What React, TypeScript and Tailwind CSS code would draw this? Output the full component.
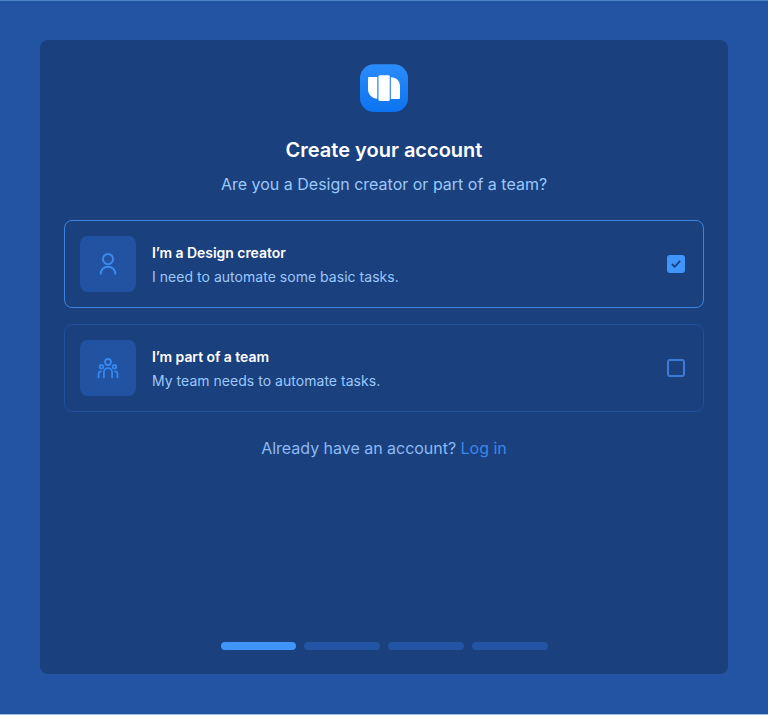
import type { ReactNode } from "react";

function Logo() {
  return (
    <svg className="h-12 w-12 shrink-0" viewBox="0 0 48 48">
      <defs>
        <linearGradient id="logo" x1="0" y1="0" x2="0" y2="1">
          <stop offset="0" stopColor="#2b8cfb" />
          <stop offset="1" stopColor="#0b74f0" />
        </linearGradient>
      </defs>
      <rect y="0.3" width="48" height="47.7" rx="14" fill="url(#logo)" />
      <path d="M9.2 13H17.3V34.8C12 34.5 8 30.5 8 25V14.2Q8 13 9.2 13Z" fill="#fff" />
      <rect x="18.5" y="11.2" width="11.2" height="25.8" rx="1.2" fill="#fff" />
      <path d="M30.8 13.3C36.5 13.5 40 17 40 22.5V33.8Q40 35 38.8 35H30.8Z" fill="#fff" />
    </svg>
  );
}

function PersonIcon() {
  return (
    <svg className="h-6 w-6" viewBox="0 0 24 24" fill="none" stroke="#3b8aec" strokeWidth="1.9" strokeLinecap="round">
      <circle cx="12" cy="7.1" r="5.1" />
      <path d="M4.7 21.8C4.7 17.7 7.9 14.8 12 14.8s7.3 2.9 7.3 7" />
    </svg>
  );
}

function TeamIcon() {
  return (
    <svg className="h-6 w-6" viewBox="0 0 24 24" fill="none" stroke="#3488ee" strokeWidth="1.8" strokeLinecap="round">
      <circle cx="12" cy="6" r="3" />
      <circle cx="5.5" cy="10.8" r="1.8" />
      <circle cx="18.5" cy="10.8" r="1.8" />
      <path d="M7.9 21.4V16.3a4.1 4.1 0 0 1 8.2 0v5.1" />
      <path d="M2.6 21.4V18Q2.6 15.5 5 15.3M21.4 21.4V18Q21.4 15.5 19 15.3" />
    </svg>
  );
}

function Option({ icon, title, text, checked }: { icon: ReactNode; title: string; text: string; checked?: boolean }) {
  return (
    <button
      className={`flex h-[88px] w-full items-center gap-4 rounded-lg border px-[15px] text-left ${
        checked ? "border-[#3c82e0]" : "border-[#2251a0]"
      }`}
    >
      <span className="flex h-14 w-14 items-center justify-center rounded-lg bg-[#2153a2]">{icon}</span>
      <span className="flex flex-1 flex-col pt-px">
        <span className="text-sm leading-6 font-semibold tracking-[-0.05px] text-white">{title}</span>
        <span className="text-sm leading-6 tracking-[0.03px] text-[#9cc8fc]">{text}</span>
      </span>
      <span
        className={`mr-[3px] flex h-[18px] w-[18px] items-center justify-center rounded-[3px] ${
          checked ? "bg-[#4095fb]" : "border-2 border-[#3d7dd5]"
        }`}
      >
        {checked && (
          <svg className="h-[18px] w-[18px]" viewBox="0 0 18 18" fill="none" stroke="#1a407d" strokeWidth="1.8">
            <path d="M4.9 9L7.7 11.8L13.1 5.9" />
          </svg>
        )}
      </span>
    </button>
  );
}

export default function App() {
  return (
    <div className="flex h-[715px] w-[768px] flex-col border-t border-b border-t-[#4b83c9] border-b-[#a5bfe2] bg-[#2254a3] px-10 pt-[39px] font-['Inter',sans-serif]">
      <main className="flex h-[634px] flex-col items-center rounded-lg bg-[#1a407d] px-6 pt-6 pb-6">
        <Logo />
        <h1 className="mt-[22px] text-xl leading-8 font-semibold text-white">Create your account</h1>
        <p className="mt-[6px] text-base leading-6 text-[#9cc8fc]">Are you a Design creator or part of a team?</p>
        <div className="mt-6 flex w-full flex-col gap-4">
          <Option checked icon={<PersonIcon />} title="I’m a Design creator" text="I need to automate some basic tasks." />
          <Option icon={<TeamIcon />} title="I’m part of a team" text="My team needs to automate tasks." />
        </div>
        <p className="mt-6 text-base leading-6 tracking-[-0.02px] text-[#8dbaf5]">
          Already have an account? <a className="text-[#3a86ea]">Log in</a>
        </p>
        <div className="mt-auto flex w-[327px] gap-2">
          <span className="h-2 flex-1 rounded-full bg-[#4095fb]" />
          <span className="h-2 flex-1 rounded-full bg-[#2254a3]" />
          <span className="h-2 flex-1 rounded-full bg-[#2254a3]" />
          <span className="h-2 flex-1 rounded-full bg-[#2254a3]" />
        </div>
      </main>
    </div>
  );
}
